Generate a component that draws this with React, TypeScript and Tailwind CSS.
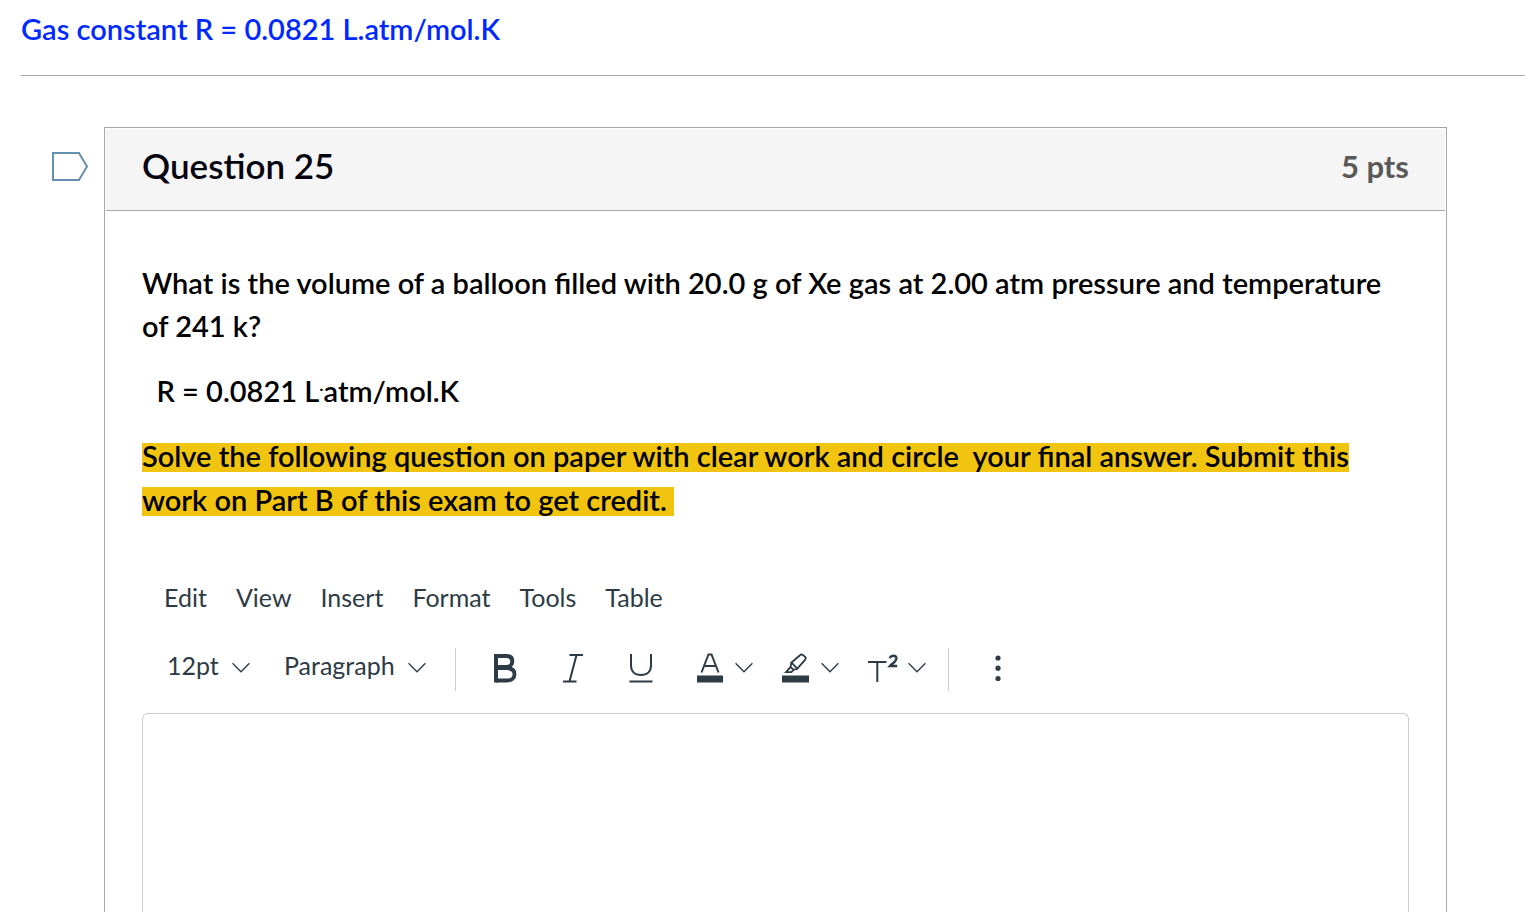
import React, { useState } from 'react';

const MENUS = ['Edit', 'View', 'Insert', 'Format', 'Tools', 'Table'];

function Chevron() {
  return (
    <svg width="18" height="12" viewBox="0 0 18 12" fill="none" stroke="currentColor" strokeWidth="1.3" className="shrink-0" aria-hidden="true">
      <path d="M0.6 1.2 9 9.8 17.4 1.2" />
    </svg>
  );
}

function Divider() {
  return <div className="h-[43px] w-px bg-[#c7cdd1]" />;
}

function BoldIcon() {
  return (
    <svg width="23" height="30" viewBox="0 0 23 30" fill="none" stroke="currentColor" strokeWidth="4" aria-hidden="true">
      <path d="M2 3h10.700c3.600 0 5.600 2 5.600 5.200s-2.100 5.700-5.600 5.700H2" />
      <path d="M2 15.200h11c4.700 0 7.500 2.100 7.500 6 0 4.100-2.700 6.300-7.500 6.300H2" strokeWidth="3.800" />
      <path d="M2 1v28.500" />
    </svg>
  );
}

function ItalicIcon() {
  return (
    <svg width="22" height="30" viewBox="0 0 22 30" fill="none" stroke="currentColor" strokeWidth="2" aria-hidden="true">
      <path d="M7.500 2H21M1 28.500h13.500M14.500 2 7.500 28.500" />
    </svg>
  );
}

function UnderlineIcon() {
  return (
    <svg width="24" height="30" viewBox="0 0 24 30" fill="none" stroke="currentColor" strokeWidth="2" aria-hidden="true">
      <path d="M2 1v11.500c0 6 4 9.500 10 9.500s10-3.500 10-9.500V1M0.500 28.500h23" />
    </svg>
  );
}

function TextColorIcon() {
  return (
    <svg width="26" height="30" viewBox="0 0 26 30" fill="none" aria-hidden="true">
      <path d="M4.500 19.500 11.500 1.500h3l7 18M7.500 13h11" stroke="currentColor" strokeWidth="2" />
      <rect y="22.500" width="26" height="7" fill="currentColor" />
    </svg>
  );
}

function HighlightIcon() {
  return (
    <svg width="27" height="30" viewBox="0 0 27 30" fill="none" aria-hidden="true">
      <path d="M9.500 9.500 18 2.200c1-.9 2.100-1 3.200-.1l1.700 1.600c1 1 1 2.100.1 3.100l-7.700 8.900Z" stroke="currentColor" strokeWidth="1.800" />
      <path d="M9.500 9.500c-.6 1.600-.6 3-.9 4.400l2.900 2.900c1.400-.3 2.600-.5 3.800-1.100M8.600 13.900 4 19.200h5.400l2.100-2.400" stroke="currentColor" strokeWidth="1.800" />
      <rect y="22.500" width="27" height="7" fill="currentColor" />
    </svg>
  );
}

function SuperscriptIcon() {
  return (
    <svg width="30" height="30" viewBox="0 0 30 30" fill="none" stroke="currentColor" strokeWidth="2" aria-hidden="true">
      <path d="M0 9h18.500M9.300 9v20" />
      <path d="M21.500 5c1-1.500 2.200-2.200 3.800-2.200 2 0 3.100 1 3.100 2.600 0 2.700-3.500 4.700-6.400 7.600h7.200" strokeWidth="2.400" />
    </svg>
  );
}

export default function App() {
  const [answer, setAnswer] = useState('');
  const [flagged, setFlagged] = useState(false);

  return (
    <div className="flex min-h-screen flex-col bg-white pl-[21px] font-['Lato',sans-serif] text-[29px] leading-[43px] text-black">
      <p className="border-b border-[#a5a9ac] pt-[7px] pb-[25px] font-semibold text-[#0029ff]">
        Gas constant R = 0.0821 L.atm/mol.K
      </p>

      <div className="mt-[51px] mr-[78px] flex flex-1 items-stretch">
        <div className="w-[83px] shrink-0 pt-6 pl-[30px]">
          <button
            type="button"
            aria-label="Flag question"
            aria-pressed={flagged}
            onClick={() => setFlagged(!flagged)}
            className="block"
          >
            <svg width="38" height="31" viewBox="0 0 38 31" fill={flagged ? '#fcd34d' : 'none'}>
              <path d="M2 2h26l8 13.500-8 13.500H2Z" stroke="#6590ab" strokeWidth="2" />
            </svg>
          </button>
        </div>

        <section className="flex min-w-0 flex-1 flex-col border border-b-0 border-[#a5a9ac] p-px pb-0">
          <header className="flex items-start justify-between border-b border-[#a5a9ac] bg-[#f5f5f5] px-9 pt-4 pb-[22px]">
            <h2 className="text-[35px] leading-[41px] font-semibold text-[#05050f]">Question 25</h2>
            <span className="text-[31px] font-bold text-[#595959]">5 pts</span>
          </header>

          <div className="flex flex-1 flex-col px-9 pt-[50px]">
            <div className="flex flex-col gap-[22px] font-semibold">
              <p>
                What is the volume of a balloon filled with 20.0 g of Xe gas at 2.00 atm pressure and temperature of 241 k?
              </p>
              <p>&nbsp; R = 0.0821 L<sup className="top-0 align-super text-[18px] leading-none">.</sup>atm/mol.K</p>
              <p className="leading-[44px]">
                <span className="bg-[linear-gradient(transparent_5px,#f1c40f_5px,#f1c40f_34px,transparent_34px)] box-decoration-clone">
                  Solve the following question on paper with clear work and circle&nbsp; your final answer. Submit this work on Part B of this exam to get credit.&nbsp;
                </span>
              </p>
            </div>

            {/* Rich text editor */}
            <div className="mt-[57px] flex flex-1 flex-col text-[25px] leading-[36px] text-[#2d3b45]">
              <div className="flex gap-[29px] pl-[22px]">
                {MENUS.map(menu => (
                  <button key={menu} type="button">{menu}</button>
                ))}
              </div>

              <div className="mt-[33px] flex items-center pl-[25px]">
                <label className="flex items-center gap-[13px] pb-1">
                  <select aria-label="Font size" className="appearance-none bg-transparent pb-1.5 leading-[30px] outline-none">
                    <option>12pt</option>
                  </select>
                  <Chevron />
                </label>
                <label className="ml-[34px] flex items-center gap-[13px] pb-1">
                  <select aria-label="Block format" className="appearance-none bg-transparent pb-1.5 leading-[30px] outline-none">
                    <option>Paragraph</option>
                  </select>
                  <Chevron />
                </label>
                <div className="mr-[38px] ml-[29px]"><Divider /></div>
                <div className="flex items-center gap-[45px] pb-1">
                  <button type="button" aria-label="Bold"><BoldIcon /></button>
                  <button type="button" aria-label="Italic"><ItalicIcon /></button>
                  <button type="button" aria-label="Underline"><UnderlineIcon /></button>
                </div>
                <div className="ml-11 flex items-center gap-[29px] pb-1">
                  <button type="button" aria-label="Text color" className="flex items-center gap-3"><TextColorIcon /><Chevron /></button>
                  <button type="button" aria-label="Background color" className="flex items-center gap-3"><HighlightIcon /><Chevron /></button>
                  <button type="button" aria-label="Superscript" className="flex items-center gap-[10px]"><SuperscriptIcon /><Chevron /></button>
                </div>
                <div className="mr-[46px] ml-[22px]"><Divider /></div>
                <button type="button" aria-label="More options" className="pb-1">
                  <svg width="6" height="30" viewBox="0 0 6 30" fill="currentColor">
                    <circle cx="3" cy="5" r="2.600" />
                    <circle cx="3" cy="15.200" r="2.600" />
                    <circle cx="3" cy="25.500" r="2.600" />
                  </svg>
                </button>
              </div>

              <textarea
                aria-label="Answer"
                value={answer}
                onChange={(e) => setAnswer(e.target.value)}
                className="mt-[22px] w-full flex-1 resize-none rounded-t-md border border-b-0 border-[#c7cdd1] p-3 outline-none"
              />
            </div>
          </div>
        </section>
      </div>
    </div>
  );
}
